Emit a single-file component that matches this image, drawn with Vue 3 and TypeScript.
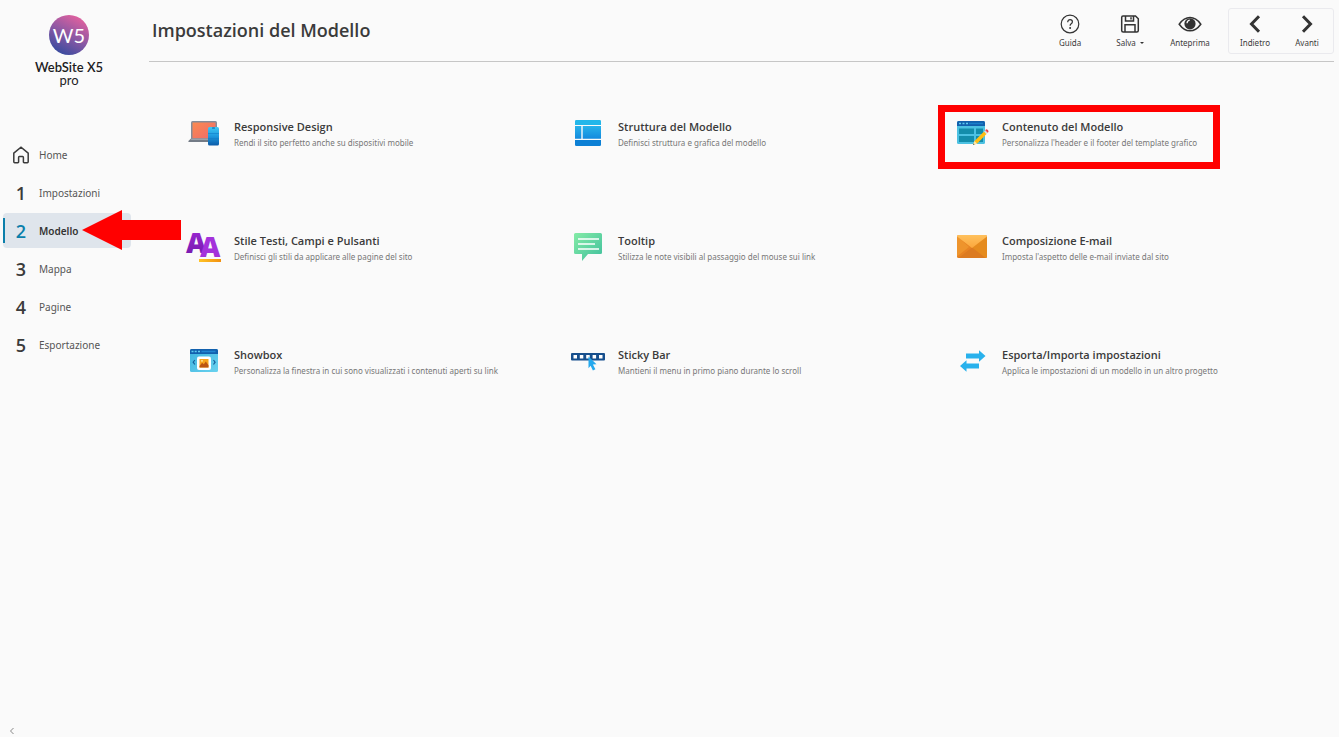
<script setup lang="ts">
import { ref } from 'vue'

interface Step {
  mark: string
  label: string
}

interface Card {
  icon: string
  title: string
  text: string
  highlighted?: boolean
}

const steps: Step[] = [
  { mark: '', label: 'Home' },
  { mark: '1', label: 'Impostazioni' },
  { mark: '2', label: 'Modello' },
  { mark: '3', label: 'Mappa' },
  { mark: '4', label: 'Pagine' },
  { mark: '5', label: 'Esportazione' },
]

const current = ref('Modello')

const cards: Card[] = [
  { icon: 'responsive', title: 'Responsive Design', text: 'Rendi il sito perfetto anche su dispositivi mobile' },
  { icon: 'structure', title: 'Struttura del Modello', text: 'Definisci struttura e grafica del modello' },
  { icon: 'content', title: 'Contenuto del Modello', text: "Personalizza l'header e il footer del template grafico", highlighted: true },
  { icon: 'styles', title: 'Stile Testi, Campi e Pulsanti', text: 'Definisci gli stili da applicare alle pagine del sito' },
  { icon: 'tooltip', title: 'Tooltip', text: 'Stilizza le note visibili al passaggio del mouse sui link' },
  { icon: 'email', title: 'Composizione E-mail', text: "Imposta l'aspetto delle e-mail inviate dal sito" },
  { icon: 'showbox', title: 'Showbox', text: 'Personalizza la finestra in cui sono visualizzati i contenuti aperti su link' },
  { icon: 'sticky', title: 'Sticky Bar', text: 'Mantieni il menu in primo piano durante lo scroll' },
  { icon: 'transfer', title: 'Esporta/Importa impostazioni', text: 'Applica le impostazioni di un modello in un altro progetto' },
]
</script>

<template>
  <div class="app">
    <aside class="sidebar">
      <div class="brand">
        <svg class="brand-mark" viewBox="0 0 40 40" aria-hidden="true">
          <defs>
            <linearGradient id="brandFill" x1="0.75" y1="0.1" x2="0.3" y2="0.95">
              <stop offset="0" stop-color="#d9609f" />
              <stop offset="0.5" stop-color="#8a58a4" />
              <stop offset="1" stop-color="#3d4c9f" />
            </linearGradient>
          </defs>
          <circle cx="20" cy="20" r="20" fill="url(#brandFill)" />
          <text class="brand-initials" x="20" y="28" text-anchor="middle">W5</text>
        </svg>
        <span class="brand-name">WebSite X5</span>
        <span class="brand-edition">pro</span>
      </div>

      <nav class="steps" aria-label="Passi">
        <button
          v-for="step in steps"
          :key="step.label"
          type="button"
          class="step"
          :class="{ active: current === step.label }"
          @click="current = step.label"
        >
          <span class="step-mark">
            <svg v-if="!step.mark" class="home-icon" viewBox="0 0 18 18" aria-hidden="true">
              <path d="M1.800 7.200 9 1.200l7.200 6v8.600q0 .9-.9.9h-3.200q-.7 0-.7-.7v-4.600q0-.8-.8-.8H7.400q-.8 0-.8.8V16q0 .7-.7.7H2.700q-.9 0-.9-.9z" />
            </svg>
            <template v-else>{{ step.mark }}</template>
          </span>
          <span class="step-label">{{ step.label }}</span>
          <svg v-if="current === step.label" class="pointer" viewBox="0 0 99 40" aria-hidden="true">
            <path d="M0 20 40 0v10h59v20H40v10z" fill="#ff0000" />
          </svg>
        </button>
      </nav>

      <button type="button" class="collapse" aria-label="Comprimi">
        <svg viewBox="0 0 6 8" aria-hidden="true"><path d="M4.500 1 1.500 4l3 3" /></svg>
      </button>
    </aside>

    <main class="main">
      <header class="header">
        <h1>Impostazioni del Modello</h1>
        <div class="toolbar">
          <button type="button" class="tool">
            <svg viewBox="0 0 24 20" aria-hidden="true">
              <circle cx="12" cy="10" r="8.800" class="line" />
              <path d="M9.700 8.200q0-2.500 2.400-2.500 2.300 0 2.300 2.100 0 1.200-1.200 2-1.100.8-1.100 2" class="line" />
              <circle cx="12.100" cy="14" r="1" class="solid" />
            </svg>
            <span>Guida</span>
          </button>
          <button type="button" class="tool">
            <svg viewBox="0 0 24 20" aria-hidden="true">
              <path d="M5 2h12.500L20.300 4.800V16.500q0 1.500-1.500 1.500H5.200q-1.500 0-1.500-1.500V3.500Q3.700 2 5 2z" class="line thick" />
              <path d="M7.500 2v5h8V2M7 18v-7.200h10V18M13 3.300v2.200" class="line thick" />
            </svg>
            <span class="with-caret">Salva <i class="caret"></i></span>
          </button>
          <button type="button" class="tool">
            <svg viewBox="0 0 24 20" aria-hidden="true">
              <path d="M1.200 10.200Q6 3.600 12 3.600t10.800 6.600Q18 16.800 12 16.800T1.200 10.200z" class="line thick" />
              <circle cx="12" cy="9.800" r="5.600" class="solid" />
              <path d="M9 9.200q.2-2.500 2.700-3" class="glint" />
            </svg>
            <span>Anteprima</span>
          </button>
          <div class="pager">
            <button type="button" class="tool">
              <svg viewBox="0 0 24 20" aria-hidden="true"><path d="M16 2.300 8.500 10l7.500 7.700" class="chevron" /></svg>
              <span>Indietro</span>
            </button>
            <button type="button" class="tool">
              <svg viewBox="0 0 24 20" aria-hidden="true"><path d="M8 2.300 15.500 10 8 17.700" class="chevron" /></svg>
              <span>Avanti</span>
            </button>
          </div>
        </div>
      </header>

      <section class="cards">
        <button
          v-for="card in cards"
          :key="card.icon"
          type="button"
          class="card"
          :class="{ highlighted: card.highlighted }"
        >
          <svg class="card-icon" viewBox="0 1 44 36" aria-hidden="true">
            <g v-if="card.icon === 'responsive'">
              <defs>
                <linearGradient id="screen" x1="0" y1="0" x2="1" y2="1">
                  <stop offset="0" stop-color="#fb8a50" /><stop offset="1" stop-color="#ee6a6c" />
                </linearGradient>
                <linearGradient id="phone" x1="0" y1="0" x2="0" y2="1">
                  <stop offset="0" stop-color="#3fc8f4" /><stop offset="0.500" stop-color="#1d98de" /><stop offset="1" stop-color="#0b5ba8" />
                </linearGradient>
              </defs>
              <rect x="9" y="6" width="26" height="19" rx="1.500" fill="#858c98" />
              <rect x="10.500" y="7.500" width="23" height="16" fill="url(#screen)" />
              <path d="M9 23.500h18v3.500H7q-1 0-.6-1z" fill="#737b86" />
              <path d="M9.500 23.500H27V25H8.500z" fill="#9ba2ab" />
              <rect x="26" y="12" width="11" height="18.500" rx="1.500" fill="url(#phone)" />
              <rect x="30" y="12.600" width="3" height="1" rx=".5" fill="#0a5a9d" />
              <path d="M26 18.500h11M26 23.500h11" stroke="#117cc7" stroke-width=".6" />
            </g>
            <g v-else-if="card.icon === 'structure'">
              <defs>
                <linearGradient id="grid" x1="0" y1="0" x2="0" y2="1">
                  <stop offset="0" stop-color="#28b2ea" /><stop offset="1" stop-color="#148ade" />
                </linearGradient>
              </defs>
              <path d="M10.300 5h23.400q1.300 0 1.300 1.300V10H9V6.300Q9 5 10.300 5z" fill="#23b7ea" />
              <path d="M9 11h6.300v12.800H9zM16.700 11H35v12.800H16.700z" fill="url(#grid)" />
              <path d="M9 25h26v4.700q0 1.300-1.300 1.300H10.300Q9 31 9 29.700z" fill="#0c80d5" />
            </g>
            <g v-else-if="card.icon === 'content'">
              <rect x="7" y="6" width="28" height="23" rx="1.500" fill="#4cc1e2" />
              <path d="M8.500 6h25Q35 6 35 7.500V11H7V7.500Q7 6 8.500 6z" fill="#1260ad" />
              <path d="M9 8.500h2M12.500 8.500h2M16 8.500h2" stroke="#5dccf0" stroke-width="1.500" />
              <path d="M19 8.500h14" stroke="#1a7fca" stroke-width="1.500" />
              <path d="M9 13.500h15v5.500H9zM26 13.500h7v5.500h-7zM9 21h15v6H9zM26 21h7v6h-7z" fill="#138dab" />
              <path d="m23 30 1.500-4L34 16.500l2.500 2.500-9.300 9.500z" fill="#ffbd13" />
              <path d="m24.500 26 2.700 2.500L23 30z" fill="#ffe6a3" />
              <path d="m23.500 28.600 1 1L23 30z" fill="#31506e" />
              <path d="m34 16.500 1.200-1.200 2.500 2.500-1.200 1.200z" fill="#d7dce2" />
              <path d="m35.200 15.300.8-.8q.7-.5 1.800.5t.6 2l-.7.8z" fill="#ea3e4b" />
            </g>
            <g v-else-if="card.icon === 'styles'">
              <defs>
                <linearGradient id="letter" x1="0" y1="0" x2="0" y2="1">
                  <stop offset="0" stop-color="#a52bdc" /><stop offset="1" stop-color="#6815a0" />
                </linearGradient>
                <linearGradient id="underline" x1="0" y1="0" x2="1" y2="0">
                  <stop offset="0" stop-color="#ffc426" /><stop offset="1" stop-color="#f29010" />
                </linearGradient>
              </defs>
              <text class="glyph">
                <tspan x="4" y="24" fill="url(#letter)">A</tspan>
                <tspan class="front" x="18" y="28">A</tspan>
              </text>
              <rect x="17" y="30" width="22" height="3" fill="url(#underline)" />
            </g>
            <g v-else-if="card.icon === 'tooltip'">
              <defs>
                <linearGradient id="bubble" x1="0" y1="0" x2="1" y2="1">
                  <stop offset="0" stop-color="#84eba6" /><stop offset="1" stop-color="#3fbf9d" />
                </linearGradient>
              </defs>
              <path d="M9.500 4h25Q36 4 36 5.500v18.200q0 1.300-1.500 1.300H22l-6 7v-7H9.500Q8 25 8 23.700V5.500Q8 4 9.500 4z" fill="url(#bubble)" />
              <path d="M12 10h21M12 15h17M12 20h21" stroke="#fff" stroke-width="1.500" />
            </g>
            <g v-else-if="card.icon === 'email'">
              <defs>
                <linearGradient id="flap" x1="0" y1="0" x2="0" y2="1">
                  <stop offset="0" stop-color="#ffc15d" /><stop offset="1" stop-color="#fba73c" />
                </linearGradient>
              </defs>
              <rect x="7" y="6" width="30" height="23" rx="1.500" fill="#e78323" />
              <path d="M37 7v20.500q0 1.500-1.500 1.500L22 18.500z" fill="#e58b1e" />
              <path d="M8.500 29h27L22 18.500z" fill="#dc7b21" />
              <path d="M7 7v20.500L19 18z" fill="#ee942c" />
              <path d="M8.500 6h27Q37 6 37 7.500L22 19 7 7.500Q7 6 8.500 6z" fill="url(#flap)" />
            </g>
            <g v-else-if="card.icon === 'showbox'">
              <defs>
                <linearGradient id="pane" x1="0" y1="0" x2="1" y2="1">
                  <stop offset="0" stop-color="#3fb4df" /><stop offset="1" stop-color="#69d2ef" />
                </linearGradient>
              </defs>
              <rect x="8" y="6" width="28" height="23" rx="1.500" fill="url(#pane)" />
              <path d="M9.500 6h25Q36 6 36 7.500V11H8V7.500Q8 6 9.500 6z" fill="#1260ad" />
              <path d="M9.500 8.500h2M12.700 8.500h2M16 8.500h2" stroke="#5dccf0" stroke-width="1.500" />
              <path d="M19.500 8.500h14" stroke="#2185d0" stroke-width="1.500" />
              <path d="m12.800 17-1.600 2.200 1.600 2.300M31.500 17l1.600 2.200-1.600 2.300" fill="none" stroke="#15629b" stroke-width="1.200" />
              <rect x="15" y="13.500" width="14" height="13.500" rx="2" fill="#fff" />
              <rect x="17.500" y="16" width="9" height="8.500" fill="#f7a51c" />
              <path d="m17.500 23 2.600-3.200 1.700 1.500 2-2.700 2.700 3.600v2.300h-9z" fill="#bd5611" />
              <circle cx="20" cy="17.800" r=".9" fill="#fff0a5" />
            </g>
            <g v-else-if="card.icon === 'sticky'">
              <rect x="5" y="10" width="34" height="7.500" rx="1" fill="#174f8d" />
              <path d="M7.500 12H11v3.500H7.500zM13.800 12h3.500v3.500h-3.500zM20.200 12h3.500v3.500h-3.500zM26.600 12h3.500v3.500h-3.500zM33 12h3.500v3.500H33z" fill="#fff" />
              <path d="m22.500 13.500 8 7.800-3.600.2 2.500 4.700-2.500 1.200-2.300-4.700-2.100 2.600z" fill="#25a9ee" />
            </g>
            <g v-else>
              <path d="M16 10.500h13V7.200l6.500 5.800-6.500 5.800V15.500H16zM29 25.500H16.500v3.300L10 23l6.500-5.800V20.500H29z" fill="#28b1ec" />
            </g>
          </svg>
          <span class="card-body">
            <span class="card-title">{{ card.title }}</span>
            <span class="card-text">{{ card.text }}</span>
          </span>
        </button>
      </section>
    </main>
  </div>
</template>

<style>
body {
  margin: 0;
  background: #fafafa;
}
</style>

<style scoped>
.app {
  display: flex;
  min-height: 100vh;
  background: #fafafa;
  color: #3b3b3b;
  font-family: 'Noto Sans', 'Open Sans', sans-serif;
}

button {
  margin: 0;
  padding: 0;
  border: 0;
  background: none;
  color: inherit;
  font: inherit;
  text-align: left;
  cursor: pointer;
}

.sidebar {
  display: flex;
  flex: 0 0 149px;
  flex-direction: column;
}

.brand {
  display: flex;
  flex-direction: column;
  align-items: center;
  box-sizing: border-box;
  width: 138px;
  height: 137px;
  padding-top: 15px;
  color: #1d1d1f;
  font-family: Lato, sans-serif;
}

.brand-mark {
  width: 40px;
  height: 40px;
}

.brand-initials {
  fill: #fff;
  font-family: Lato, sans-serif;
  font-size: 20px;
}

.brand-name {
  margin-top: 5px;
  font-size: 13px;
  font-weight: 600;
  line-height: 14px;
}

.brand-edition {
  font-size: 13px;
  line-height: 12px;
}

.steps {
  display: flex;
  flex-direction: column;
  gap: 3px;
  padding: 0 18px 0 3px;
}

.step {
  position: relative;
  display: flex;
  align-items: center;
  height: 35px;
  border-radius: 4px;
  color: #555;
  font-size: 10px;
}

.step-mark {
  display: flex;
  justify-content: center;
  width: 36px;
  color: #3b3b3b;
  font-family: 'Open Sans', 'Noto Sans', sans-serif;
  font-size: 18px;
  font-weight: 600;
}

.home-icon {
  width: 18px;
  height: 18px;
  fill: none;
  stroke: #3b3b3b;
  stroke-width: 1.500;
}

.step.active {
  background: #dfe5ec;
  color: #333;
  font-weight: 600;
}

.step.active .step-mark {
  color: #0b7fab;
}

.step.active::before {
  position: absolute;
  top: 5px;
  bottom: 5px;
  left: 0;
  width: 2px;
  background: #0b7fab;
  content: '';
}

.pointer {
  position: absolute;
  top: -3px;
  left: 79px;
  z-index: 1;
  width: 99px;
  height: 40px;
}

.collapse {
  width: 24px;
  margin-top: auto;
  line-height: 0;
  text-align: center;
}

.collapse svg {
  width: 6px;
  height: 8px;
  margin-bottom: 2px;
  fill: none;
  stroke: #888;
}

.main {
  flex: 1;
  padding-right: 5px;
}

.header {
  display: flex;
  align-items: flex-start;
  justify-content: space-between;
  box-sizing: border-box;
  height: 62px;
  border-bottom: 1px solid #c6c6c6;
}

h1 {
  margin: 0;
  padding: 16px 0 0 3px;
  font-family: 'Open Sans', 'Noto Sans', sans-serif;
  font-size: 18px;
  font-weight: 600;
  line-height: 28px;
}

.toolbar {
  display: flex;
  padding-top: 8px;
}

.tool {
  display: flex;
  flex-direction: column;
  align-items: center;
  box-sizing: border-box;
  width: 60px;
  padding-top: 6px;
  font-size: 8px;
  line-height: 12px;
}

.tool svg {
  width: 24px;
  height: 20px;
  margin-bottom: 3px;
}

.line {
  fill: none;
  stroke: #333;
  stroke-width: 1.200;
}

.thick {
  stroke-width: 1.500;
}

.solid {
  fill: #333;
}

.glint {
  fill: none;
  stroke: #fff;
  stroke-width: 1.200;
}

.chevron {
  fill: none;
  stroke: #333;
  stroke-width: 3;
}

.with-caret {
  display: flex;
  align-items: center;
  gap: 4px;
}

.caret {
  border: 2px solid transparent;
  border-top-color: #333;
  border-bottom: 0;
}

.pager {
  display: flex;
  box-sizing: border-box;
  height: 46px;
  margin-left: 8px;
  border: 1px solid #eaeaee;
  border-radius: 3px;
}

.pager .tool {
  width: 52px;
  padding-top: 5px;
}

.cards {
  display: grid;
  grid-template-columns: repeat(3, 1fr);
  grid-auto-rows: 114px;
  padding: 15px 0 0 33px;
}

.card {
  position: relative;
  display: flex;
  gap: 8px;
  align-items: center;
}

.card-icon {
  flex: none;
  width: 44px;
  height: 36px;
  overflow: visible;
}

.card-body {
  display: flex;
  flex-direction: column;
}

.card-title {
  font-family: 'Open Sans', 'Noto Sans', sans-serif;
  font-size: 11px;
  font-weight: 600;
  line-height: 18px;
}

.card-text {
  color: #777;
  font-size: 8px;
  line-height: 14px;
}

.card.highlighted::after {
  position: absolute;
  top: 28px;
  left: -12px;
  box-sizing: border-box;
  width: 282px;
  height: 64px;
  border: 7px solid #ff0000;
  content: '';
}

.glyph {
  font-family: 'Open Sans', sans-serif;
  font-size: 28px;
  font-weight: 800;
}

.front {
  fill: #a432db;
}
</style>
